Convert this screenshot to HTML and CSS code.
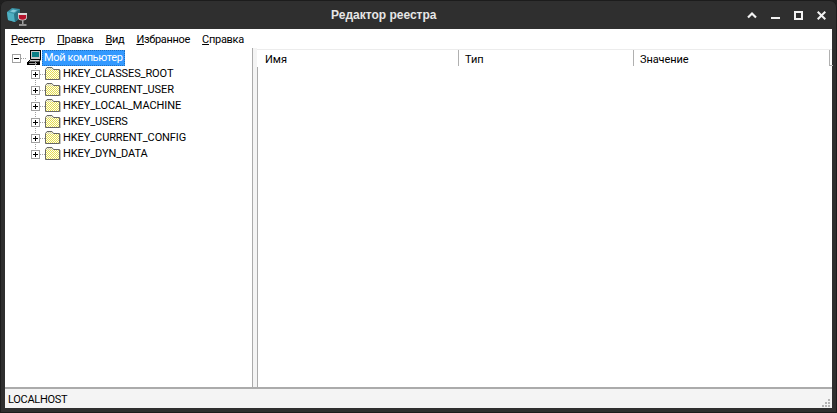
FILE: index.html
```html
<!DOCTYPE html>
<html lang="ru">
<head>
<meta charset="utf-8">
<title>Редактор реестра</title>
<link rel="stylesheet" href="styles.css">
</head>
<body>
<div class="window">
  <svg class="defs" width="0" height="0"><defs>
    <pattern id="dither" width="2" height="2" patternUnits="userSpaceOnUse"><rect width="2" height="2" fill="#fdfdf0"/><rect width="1" height="1" fill="#e4dc50"/><rect x="1" y="1" width="1" height="1" fill="#e4dc50"/></pattern>
    <symbol id="plus" viewBox="0 0 9 9"><rect x=".5" y=".5" width="8" height="8" fill="#fff" stroke="#a0a0a0"/><path d="M2 4.500 H7 M4.500 2 V7" stroke="#000"/></symbol>
    <symbol id="folder" viewBox="0 0 16 13"><path d="M.5 2.500 L2 .5 H7 L8.500 2.500 H14.500 V12.500 H.5 Z" fill="url(#dither)" stroke="#666"/><path d="M1.500 2.500 L2.500 1.500 H6.500 L7.500 2.500 Z" fill="#ddd"/><path d="M15 3 H15.800 V13 H1 V12.900 H15 Z" fill="#b8b8b8"/></symbol>
  </defs></svg>
  <header class="titlebar">
    <svg class="app-icon" width="20" height="18" viewBox="0 0 20 18">
      <path d="M0 4 L5 0 L13 1 L13 10 L8 14 L1 12 Z" fill="#3c95a8"/>
      <path d="M0 4 L7 6 L8 14 L1 12 Z" fill="#4fb0c2"/>
      <path d="M7 6 L13 1 L13 10 L8 14 Z" fill="#2a7385"/>
      <path d="M3 3.500 L6 1.500 L10 2.500 L7 4.500 Z" fill="#86cad8"/>
      <path d="M11 5 H20 V9 Q20 12.500 15.500 12.500 Q11 12.500 11 9 Z" fill="#d8d8d8"/>
      <path d="M11.800 7 H19.200 V9 Q19.200 11.700 15.500 11.700 Q11.800 11.700 11.800 9 Z" fill="#b5122c"/>
      <rect x="15" y="12" width="1.500" height="4" fill="#a0a0a0"/>
      <rect x="12" y="16" width="7.500" height="2" fill="#8e8e8e"/>
    </svg>
    <h1 class="title">Редактор реестра</h1>
    <div class="controls">
      <svg class="ctl" width="10" height="8" viewBox="0 0 10 8"><path d="M1 6.500 L5 2.500 L9 6.500" fill="none" stroke="#f2f2f2" stroke-width="2.200"/></svg>
      <svg class="ctl" width="9" height="10" viewBox="0 0 9 10"><rect x="0" y="7" width="9" height="2" fill="#f2f2f2"/></svg>
      <svg class="ctl" width="9" height="9" viewBox="0 0 9 9"><rect x="1" y="1" width="7" height="7" fill="none" stroke="#f2f2f2" stroke-width="2"/></svg>
      <svg class="ctl" width="9" height="9" viewBox="0 0 9 9"><path d="M.7 .7 L8.300 8.300 M8.300 .7 L.7 8.300" fill="none" stroke="#f2f2f2" stroke-width="2"/></svg>
    </div>
  </header>
  <div class="client">
    <nav class="menubar">
      <span class="menu"><u>Р</u>еестр</span>
      <span class="menu"><u>П</u>равка</span>
      <span class="menu"><u>В</u>ид</span>
      <span class="menu"><u>И</u>збранное</span>
      <span class="menu"><u>С</u>правка</span>
    </nav>
    <main class="panes">
      <section class="tree">
        <div class="node node-root">
          <svg class="box-s" width="9" height="9" viewBox="0 0 9 9"><rect x=".5" y=".5" width="8" height="8" fill="#fff" stroke="#a0a0a0"/><rect x="2" y="4" width="5" height="1" fill="#000"/></svg>
          <span class="dots-h"></span>
          <svg class="pc" width="15" height="16" viewBox="0 0 15 16">
            <rect x="3" y="0" width="11" height="9" fill="#c8c8c8"/>
            <rect x="3" y="0" width="11" height="1" fill="#000"/>
            <rect x="3" y="0" width="1" height="9" fill="#000"/>
            <rect x="13" y="0" width="1" height="10" fill="#000"/>
            <rect x="5" y="2" width="7" height="5" fill="#0b7f86"/>
            <path d="M3.500 9.500 H13.500 L12 12 H1 Z" fill="#c8c8c8" stroke="#000"/>
            <rect x="0" y="12" width="13" height="3" fill="#000"/>
            <rect x="2" y="13" width="8" height="1" fill="#9a9a9a"/>
          </svg>
          <span class="label label-sel">Мой компьютер</span>
        </div>
        <div class="node"><span class="indent"></span><svg class="box-s" width="9" height="9"><use href="#plus"/></svg><span class="dots-c"></span><svg class="folder" width="16" height="13"><use href="#folder"/></svg><span class="label">HKEY_CLASSES_ROOT</span></div>
        <div class="node"><span class="indent"></span><svg class="box-s" width="9" height="9"><use href="#plus"/></svg><span class="dots-c"></span><svg class="folder" width="16" height="13"><use href="#folder"/></svg><span class="label">HKEY_CURRENT_USER</span></div>
        <div class="node"><span class="indent"></span><svg class="box-s" width="9" height="9"><use href="#plus"/></svg><span class="dots-c"></span><svg class="folder" width="16" height="13"><use href="#folder"/></svg><span class="label">HKEY_LOCAL_MACHINE</span></div>
        <div class="node"><span class="indent"></span><svg class="box-s" width="9" height="9"><use href="#plus"/></svg><span class="dots-c"></span><svg class="folder" width="16" height="13"><use href="#folder"/></svg><span class="label">HKEY_USERS</span></div>
        <div class="node"><span class="indent"></span><svg class="box-s" width="9" height="9"><use href="#plus"/></svg><span class="dots-c"></span><svg class="folder" width="16" height="13"><use href="#folder"/></svg><span class="label">HKEY_CURRENT_CONFIG</span></div>
        <div class="node"><span class="indent"></span><svg class="box-s" width="9" height="9"><use href="#plus"/></svg><span class="dots-c"></span><svg class="folder" width="16" height="13"><use href="#folder"/></svg><span class="label">HKEY_DYN_DATA</span></div>
      </section>
      <div class="splitter"></div>
      <section class="list">
        <div class="list-head">
          <div class="col col-name">Имя</div>
          <div class="col col-type">Тип</div>
          <div class="col col-value">Значение</div>
          <div class="head-notch"></div>
        </div>
        <div class="list-body"></div>
      </section>
    </main>
    <footer class="statusbar">
      <span class="status-text">LOCALHOST</span>
      <svg class="grip" width="8" height="8" viewBox="0 0 8 8" fill="#b4b4b4">
        <rect x="6" y="0" width="2" height="2"/>
        <rect x="3" y="3" width="2" height="2"/><rect x="6" y="3" width="2" height="2"/>
        <rect x="0" y="6" width="2" height="2"/><rect x="3" y="6" width="2" height="2"/><rect x="6" y="6" width="2" height="2"/>
      </svg>
    </footer>
  </div>
</div>
</body>
</html>
```
FILE: styles.css
```css
* { box-sizing: border-box; }
html, body { margin: 0; height: 100%; background: #1f1f1f; }
body { font: 11px Roboto, "Liberation Sans", Arial, sans-serif; color: #000; overflow: hidden; }
.defs { position: absolute; }
.window {
  width: 837px; height: 413px; display: flex; flex-direction: column;
  background: #2f2f2f; border-radius: 7px 7px 0 0; padding: 0 5px 5px 5px;
  box-shadow: inset 0 0 0 1px #1c1c1c;
}
.titlebar { height: 29px; flex: none; display: flex; align-items: center; color: #e8e8e8; }
.app-icon { margin: 5px 0 0 2px; flex: none; }
.title {
  margin: 1px 0 0 304px; white-space: nowrap;
  font: bold 12px/15px "Liberation Sans", Arial, sans-serif; color: #e6e6e6;
}
.controls { margin-left: auto; display: flex; align-items: center; gap: 14px; padding-right: 6px; margin-top: 1px; }
.ctl { display: block; }
.client { flex: 1; min-height: 0; display: flex; flex-direction: column; background: #f4f4f4; }
.menubar { height: 19px; flex: none; background: #fff; display: flex; align-items: center; gap: 12px; padding: 2px 0 0 6px; line-height: 14px; letter-spacing: -.3px; }
.menu u { text-decoration: underline; }
.panes { flex: 1; min-height: 0; display: flex; border-bottom: 2px solid #ababab; background: #f4f4f4; }
.tree { width: 248px; flex: none; background: #fff; border-right: 1px solid #ababab; padding: 2px 0 0 7px; }
.splitter { width: 4px; flex: none; background: #f4f4f4; }
.list { flex: 1; display: flex; flex-direction: column; background: #fff; min-width: 0; padding-top: 1px; }
.list-head { height: 18px; flex: none; display: flex; background: #fff; border-top: 1px solid #ececec; position: relative; }
.col { height: 16px; line-height: 20px; border-right: 1px solid #b0b0b0; flex: none; }
.col-name { width: 202px; padding-left: 8px; }
.col-type { width: 175px; padding-left: 6px; }
.col-value { width: 196px; padding-left: 6px; letter-spacing: -.1px; }
.head-notch { width: 3px; height: 1px; background: #b0b0b0; margin-top: 15px; flex: none; }
.list-body { flex: 1; background: #fff; border-left: 1px solid #ababab; }
.node { height: 16px; display: flex; align-items: center; position: relative; }
.node:not(.node-root)::before, .node-root::after {
  content: ""; position: absolute; left: 23px; width: 1px;
  background: repeating-linear-gradient(180deg, #a0a0a0 0 1px, transparent 1px 2px);
}
.node:not(.node-root)::before { top: -4px; height: 8px; }
.node-root::after { top: 12px; height: 4px; }
.box-s { display: block; flex: none; position: relative; z-index: 1; }
.dots-h { width: 6px; height: 1px; background: repeating-linear-gradient(90deg, #a0a0a0 0 1px, transparent 1px 2px); flex: none; }
.pc { flex: none; }
.label { white-space: nowrap; line-height: 14px; letter-spacing: -.1px; }
.label-sel { background: #3399ff; color: #fff; padding: 1px 2px; outline: 1px dotted #1d6fc0; outline-offset: -1px; letter-spacing: -.37px; }
.indent { width: 19px; flex: none; }
.dots-c { width: 5px; height: 1px; flex: none; background: repeating-linear-gradient(90deg, #a0a0a0 0 1px, transparent 1px 2px); }
.folder { flex: none; margin-right: 2px; margin-top: -2px; display: block; }
.statusbar { height: 19px; flex: none; display: flex; align-items: center; justify-content: space-between; padding: 0 2px 0 3px; background: #f4f4f4; }
.status-text { letter-spacing: -.3px; margin-top: 1px; }
.grip { margin-top: 8px; }
```
